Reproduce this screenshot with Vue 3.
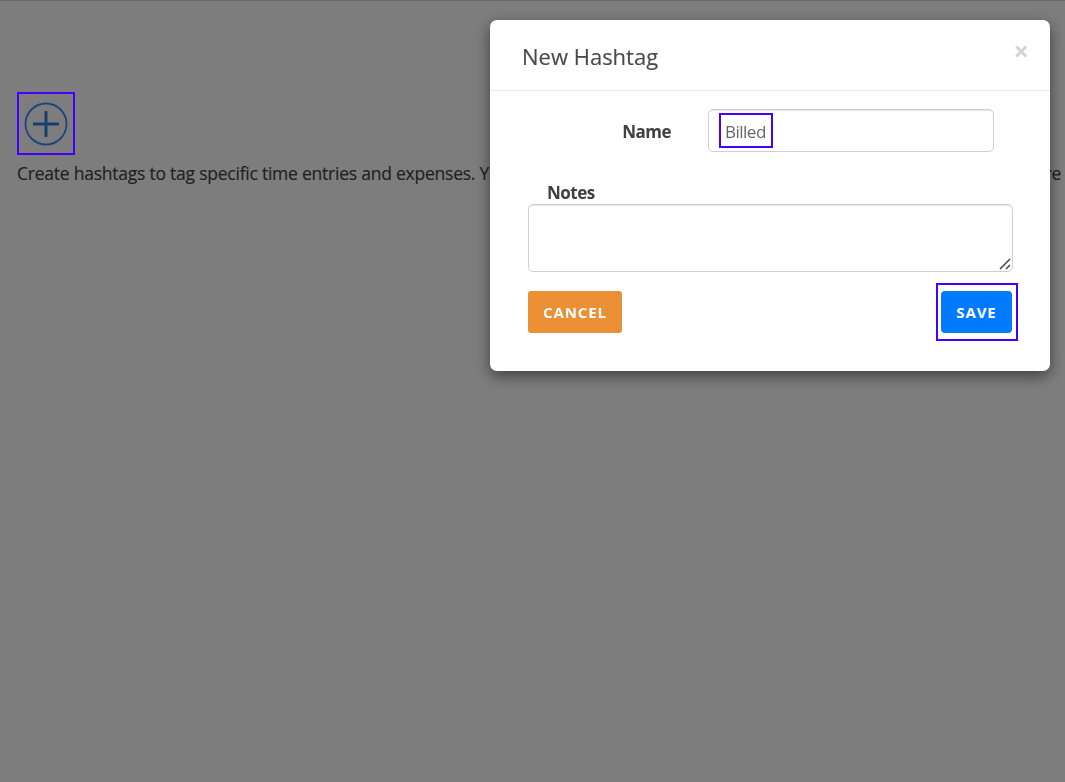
<script setup>
const intro = 'Create hashtags to tag specific time entries and expenses. You can then use them to filter the reports and find the entries that share a single theme'
</script>

<template>
  <div class="page">
    <div class="add-wrap">
      <svg class="add-icon" width="44" height="44" viewBox="0 0 44 44" fill="none">
        <circle cx="22" cy="22" r="20.5" stroke="#3f8cff" stroke-width="1.8" />
        <path d="M22 9V35M9 22H35" stroke="#2f80e8" stroke-width="3" />
      </svg>
      <span class="mark mark-add"></span>
    </div>
    <p class="intro">{{ intro }}</p>
  </div>

  <div class="overlay">
    <section class="modal">
      <header class="modal-head">
        <h2 class="modal-title">New Hashtag</h2>
        <span class="close">×</span>
      </header>
      <div class="modal-body">
        <div class="name-row">
          <label class="label name-label">Name</label>
          <div class="input-wrap">
            <input class="input" value="Billed" />
            <span class="mark mark-name"></span>
          </div>
        </div>
        <label class="label notes-label">Notes</label>
        <div class="notes-wrap">
          <textarea class="notes"></textarea>
          <svg class="grip" width="12" height="12" viewBox="0 0 12 12" fill="none">
            <path d="M1 11L11 1M7 11L11 7" stroke="#444" stroke-width="1.5" />
          </svg>
        </div>
        <div class="actions">
          <button class="btn cancel">CANCEL</button>
          <div class="save-wrap">
            <button class="btn save">SAVE</button>
            <span class="mark mark-save"></span>
          </div>
        </div>
      </div>
    </section>
  </div>
</template>

<style>
html, body { margin: 0; background: #fff; overflow: hidden; }
</style>

<style scoped>
.page {
  height: 690px;
  border-top: 1px solid #d8d8d8;
  padding: 91px 0 0 17px;
  box-sizing: content-box;
  overflow: hidden;
  font-family: "Open Sans", "Noto Sans", sans-serif;
}
.add-wrap {
  position: relative;
  width: 58px;
  height: 63px;
  display: flex;
  align-items: center;
  justify-content: center;
}
.add-icon { display: block; margin-top: 1px; }
.intro {
  margin: 6px 0 0;
  font-size: 17.5px;
  line-height: 24px;
  letter-spacing: -0.235px;
  color: #404448;
  white-space: nowrap;
  -webkit-text-stroke: 0.15px #404448;
}
.mark {
  position: absolute;
  border: 2px solid #4400ff;
  box-sizing: border-box;
  pointer-events: none;
}
.mark-add { inset: 0; z-index: 20; }
.overlay {
  position: fixed;
  inset: 0;
  z-index: 10;
  background: rgba(0, 0, 0, 0.51);
  display: flex;
  justify-content: flex-end;
  align-items: flex-start;
  padding: 20px 15px 0 0;
  box-sizing: border-box;
}
.modal {
  width: 560px;
  height: 351px;
  background: #fff;
  border-radius: 7px;
  box-shadow: 0 5px 15px rgba(0, 0, 0, 0.5);
  font-family: "Open Sans", "Noto Sans", sans-serif;
  color: #444;
}
.modal-head {
  height: 71px;
  box-sizing: border-box;
  border-bottom: 1px solid #e9ecef;
  padding: 0 21px 0 32px;
  display: flex;
  justify-content: space-between;
  align-items: flex-start;
}
.modal-title {
  margin: 19px 0 0;
  font-size: 22px;
  line-height: 34px;
  font-weight: 400;
  letter-spacing: 0;
  color: #4a4a4a;
  -webkit-text-stroke: 0.15px #4a4a4a;
}
.close {
  margin-top: 16px;
  font-size: 27px;
  line-height: 30px;
  font-weight: 700;
  color: #d4d4d4;
}
.modal-body { padding: 18px 37px 0 38px; }
.name-row {
  display: flex;
  align-items: center;
  height: 43px;
}
.label {
  font-size: 17px;
  font-weight: 700;
  letter-spacing: -0.5px;
  color: #404040;
}
.name-label {
  width: 143px;
  text-align: right;
  margin-right: 37px;
  padding-top: 2px;
}
.input-wrap {
  position: relative;
  width: 286px;
  height: 43px;
}
.input {
  width: 100%;
  height: 100%;
  box-sizing: border-box;
  border: 1px solid #d0d0d0;
  box-shadow: inset 0 1px 0 #e6e6e6;
  border-radius: 5px;
  padding: 2px 16px 0;
  font: 400 17px "Open Sans", "Noto Sans", sans-serif;
  letter-spacing: -0.5px;
  color: #666;
  outline: none;
}
.mark-name { left: 11px; top: 4px; width: 54px; height: 35px; }
.notes-label {
  display: block;
  margin: 30px 0 0 19px;
  line-height: 22px;
}
.notes-wrap {
  position: relative;
  width: 485px;
  height: 68px;
}
.notes {
  display: block;
  width: 100%;
  height: 100%;
  box-sizing: border-box;
  border: 1px solid #d0d0d0;
  box-shadow: inset 0 1px 0 #e6e6e6;
  border-radius: 5px;
  outline: none;
  resize: none;
}
.grip {
  position: absolute;
  right: 2px;
  bottom: 2px;
  pointer-events: none;
}
.actions {
  display: flex;
  justify-content: space-between;
  margin-top: 19px;
  width: 484px;
}
.btn {
  height: 42px;
  border: 0;
  border-radius: 3px;
  color: #fff;
  font: 700 15px "Open Sans", "Noto Sans", sans-serif;
  letter-spacing: 0.9px;
  padding: 0;
}
.cancel { width: 94px; background: #ec9035; }
.save { width: 71px; background: #007bff; display: block; border-radius: 4px; }
.save-wrap { position: relative; }
.mark-save { left: -5px; top: -8px; width: 82px; height: 58px; }
</style>
